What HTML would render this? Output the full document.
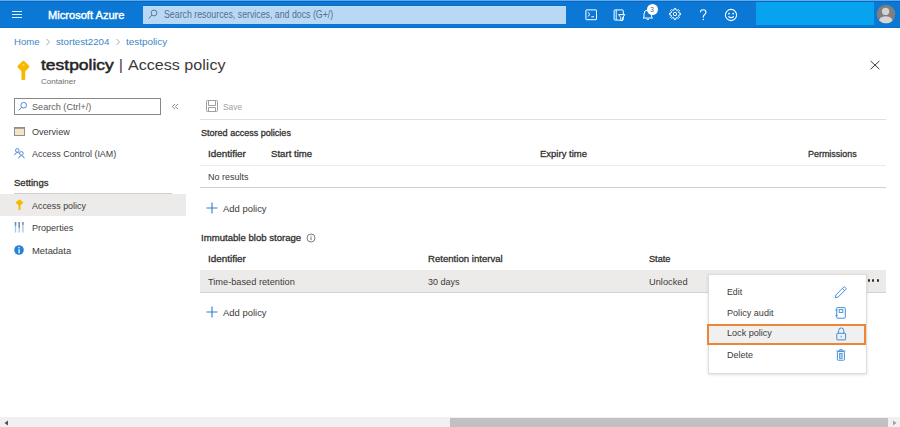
<!DOCTYPE html>
<html><head><meta charset="utf-8"><style>
html,body{margin:0;padding:0;width:900px;height:427px;overflow:hidden;background:#fff;position:relative;font-family:"Liberation Sans", sans-serif}
.t{position:absolute;white-space:nowrap;line-height:1}
.r{position:absolute}
</style></head><body>
<div class="r" style="left:0px;top:0px;width:900px;height:28px;background:#0a78d4"></div>
<div class="r" style="left:0px;top:27px;width:900px;height:1px;background:#0a6fc6"></div>
<div class="r" style="left:0px;top:0px;width:900px;height:1px;background:#5eaaf2"></div>
<div class="r" style="left:0px;top:1px;width:900px;height:1px;background:#0a68bc"></div>
<div class="r" style="left:11.6px;top:11px;width:10.9px;height:1px;background:#dcefff"></div>
<div class="r" style="left:11.6px;top:14px;width:10.9px;height:1px;background:#dcefff"></div>
<div class="r" style="left:11.6px;top:17px;width:10.9px;height:1px;background:#dcefff"></div>
<div class="t" style="left:48.3px;top:10px;font-size:10.6px;color:#fff;font-weight:normal;-webkit-text-stroke:0.4px #fff;transform:scaleX(1.0477);transform-origin:0 0;">Microsoft Azure</div>
<div class="r" style="left:142.8px;top:6px;width:423.2px;height:18px;background:#b9d8f4;border-top:1px solid #b8e2fb;box-sizing:border-box;box-shadow:0 -1px 0 #0a6cc2"></div>
<svg class="r" style="left:148px;top:9px" width="10" height="11" viewBox="0 0 10 11"><circle cx="6" cy="4" r="2.9" fill="none" stroke="#55769a" stroke-width="0.95"/><line x1="3.9" y1="6.1" x2="0.8" y2="9.4" stroke="#55769a" stroke-width="1"/></svg>
<div class="t" style="left:164.4px;top:10px;font-size:10px;color:#52708f;font-weight:normal;transform:scaleX(0.8786);transform-origin:0 0;">Search resources, services, and docs (G+/)</div>
<svg class="r" style="left:584.5px;top:9px" width="13" height="12" viewBox="0 0 13 12"><rect x="0.9" y="0.9" width="10.6" height="9.8" rx="0.5" fill="none" stroke="#ffffff" stroke-width="1"/><polyline points="2.7,3.3 5,5.4 2.7,7.6" fill="none" stroke="#ffffff" stroke-width="1"/><line x1="6.3" y1="7.8" x2="9" y2="7.8" stroke="#ffffff" stroke-width="1"/></svg>
<svg class="r" style="left:612.5px;top:8.5px" width="13" height="13" viewBox="0 0 13 13"><rect x="1.1" y="0.9" width="9.2" height="10.2" rx="1" fill="none" stroke="#ffffff" stroke-width="1"/><line x1="3.2" y1="0.9" x2="3.2" y2="11" stroke="#ffffff" stroke-width="1"/><polygon points="5.6,5.6 11.8,5.6 9.6,8.6 9.6,11.6 7.8,11.6 7.8,8.6" fill="#0a78d4" stroke="#ffffff" stroke-width="1" stroke-linejoin="round"/></svg>
<svg class="r" style="left:641px;top:8px" width="13" height="13" viewBox="0 0 13 13"><path d="M3,9.3 V6 Q3,2 6.8,2 Q10.6,2 10.6,6 V9.3 L11.6,10 H2 Z" fill="none" stroke="#ffffff" stroke-width="1" stroke-linejoin="round"/><path d="M5.6,11 Q6.8,12.3 8,11" fill="none" stroke="#ffffff" stroke-width="1"/></svg>
<div class="r" style="left:646.5px;top:4.3px;width:11.2px;height:11.2px;border-radius:50%;background:#fff"></div>
<div class="t" style="left:650.3px;top:7px;font-size:6.5px;color:#605e5c;font-weight:normal;">3</div>
<svg class="r" style="left:667.8px;top:7.2px" width="14" height="14" viewBox="0 0 14 14"><path d="M10.99,6.04 L12.55,6.25 L12.55,7.75 L10.99,7.96 L10.50,9.14 L11.45,10.40 L10.40,11.45 L9.14,10.50 L7.96,10.99 L7.75,12.55 L6.25,12.55 L6.04,10.99 L4.86,10.50 L3.60,11.45 L2.55,10.40 L3.50,9.14 L3.01,7.96 L1.45,7.75 L1.45,6.25 L3.01,6.04 L3.50,4.86 L2.55,3.60 L3.60,2.55 L4.86,3.50 L6.04,3.01 L6.25,1.45 L7.75,1.45 L7.96,3.01 L9.14,3.50 L10.40,2.55 L11.45,3.60 L10.50,4.86 Z" fill="none" stroke="#ffffff" stroke-width="1" stroke-linejoin="round"/><circle cx="7" cy="7" r="1.7" fill="none" stroke="#ffffff" stroke-width="1"/></svg>
<svg class="r" style="left:699px;top:9px" width="9" height="12" viewBox="0 0 9 12"><path d="M1.4,3.3 Q1.4,0.7 4.2,0.7 Q7,0.7 7,3.1 Q7,4.6 5.4,5.7 Q4.3,6.5 4.3,7.9 V8.6" fill="none" stroke="#ffffff" stroke-width="1.15"/><circle cx="4.3" cy="10.5" r="0.75" fill="#ffffff"/></svg>
<svg class="r" style="left:724px;top:7.5px" width="14" height="14" viewBox="0 0 14 14"><circle cx="7" cy="7" r="5.6" fill="none" stroke="#ffffff" stroke-width="1.1"/><circle cx="5" cy="5.6" r="0.95" fill="#ffffff"/><circle cx="9.2" cy="5.6" r="0.95" fill="#ffffff"/><path d="M4.3,8.3 Q7.1,11 9.9,8.3" fill="none" stroke="#ffffff" stroke-width="1.1"/></svg>
<div class="r" style="left:756px;top:2px;width:118px;height:23px;background:#08a3ee"></div>
<svg class="r" style="left:876px;top:4px" width="20" height="20" viewBox="0 0 20 20"><defs><clipPath id="avc"><circle cx="10" cy="10.1" r="9.3"/></clipPath></defs><circle cx="10" cy="10.1" r="9.3" fill="#7f7f7f"/><g clip-path="url(#avc)"><circle cx="9.6" cy="7.4" r="3.7" fill="#d2d2d2"/><path d="M2.5,19.5 Q2.5,12.3 9.8,12.3 Q17,12.3 17,19.5 Z" fill="#d6d6d6"/></g></svg>
<div class="t" style="left:14.2px;top:38px;font-size:9.3px;color:#3a87c6;font-weight:normal;transform:scaleX(1.0317);transform-origin:0 0;">Home</div>
<svg class="r" style="left:45px;top:38px" width="6" height="8" viewBox="0 0 6 8"><polyline points="1.5,1 4.5,4 1.5,7" fill="none" stroke="#a19f9d" stroke-width="0.9"/></svg>
<div class="t" style="left:55.9px;top:38px;font-size:9.3px;color:#3a87c6;font-weight:normal;transform:scaleX(1.0416);transform-origin:0 0;">stortest2204</div>
<svg class="r" style="left:114.5px;top:38px" width="6" height="8" viewBox="0 0 6 8"><polyline points="1.5,1 4.5,4 1.5,7" fill="none" stroke="#a19f9d" stroke-width="0.9"/></svg>
<div class="t" style="left:125.6px;top:38px;font-size:9.3px;color:#3a87c6;font-weight:normal;transform:scaleX(1.0628);transform-origin:0 0;">testpolicy</div>
<svg class="r" style="left:16px;top:60px" width="15" height="21" viewBox="0 0 15 21"><path d="M7.4,2.3 L11.8,6.6 L7.4,10.9 L3,6.6 Z" fill="#f7b900" stroke="#f7b900" stroke-width="3" stroke-linejoin="round"/><rect x="5.4" y="8" width="3.8" height="12" rx="1" fill="#f7b900"/><ellipse cx="7.4" cy="5" rx="1.3" ry="1" fill="#ffd84d"/></svg>
<div class="t" style="left:41.2px;top:57px;font-size:15.2px;color:#252423;font-weight:normal;-webkit-text-stroke:0.5px #252423;transform:scaleX(1.1499);transform-origin:0 0;">testpolicy</div>
<div class="t" style="left:119px;top:58px;font-size:14.5px;color:#323130;font-weight:normal;">|</div>
<div class="t" style="left:128.3px;top:58px;font-size:14.5px;color:#3b3a39;font-weight:normal;transform:scaleX(1.1099);transform-origin:0 0;">Access policy</div>
<div class="t" style="left:41.2px;top:78px;font-size:8px;color:#6e6c6a;font-weight:normal;transform:scaleX(1.0032);transform-origin:0 0;">Container</div>
<svg class="r" style="left:868.7px;top:59px" width="12" height="12" viewBox="0 0 12 12"><path d="M1.6,2 L10.4,10.2 M10.4,2 L1.6,10.2" stroke="#3b3a39" stroke-width="1"/></svg>
<div class="r" style="left:14px;top:98px;width:147px;height:16.5px;border:1px solid #8a8886;box-sizing:border-box;background:#fff"></div>
<svg class="r" style="left:18px;top:101px" width="10" height="11" viewBox="0 0 10 11"><circle cx="5.7" cy="4.2" r="2.8" fill="none" stroke="#4a86cc" stroke-width="0.95"/><line x1="3.7" y1="6.2" x2="0.6" y2="9.4" stroke="#4a86cc" stroke-width="1"/></svg>
<div class="t" style="left:31.7px;top:103px;font-size:9.3px;color:#605e5c;font-weight:normal;transform:scaleX(0.9785);transform-origin:0 0;">Search (Ctrl+/)</div>
<svg class="r" style="left:171px;top:103px" width="8" height="8" viewBox="0 0 8 8"><polyline points="4,1 1.3,3.6 4,6.2" fill="none" stroke="#8a8886" stroke-width="1"/><polyline points="7,1 4.3,3.6 7,6.2" fill="none" stroke="#8a8886" stroke-width="1"/></svg>
<svg class="r" style="left:14px;top:126.8px" width="11" height="9" viewBox="0 0 11 9"><defs><radialGradient id="ovg" cx="0.45" cy="0.5" r="0.6"><stop offset="0" stop-color="#fde3a8"/><stop offset="1" stop-color="#efe6d6"/></radialGradient></defs><rect x="0" y="0" width="11" height="9" fill="#8e8e8e"/><rect x="1" y="1.8" width="9" height="6.2" fill="url(#ovg)"/></svg>
<div class="t" style="left:31.7px;top:128px;font-size:9.3px;color:#3b3a39;font-weight:normal;transform:scaleX(0.9729);transform-origin:0 0;">Overview</div>
<svg class="r" style="left:14px;top:147.8px" width="11" height="11" viewBox="0 0 11 11"><circle cx="3.3" cy="2.4" r="1.8" fill="none" stroke="#3f7fcf" stroke-width="0.9"/><path d="M0.6,7.2 Q1,4.6 3.3,4.6 Q4.8,4.6 5.4,5.6" fill="none" stroke="#3f7fcf" stroke-width="0.9"/><circle cx="7.4" cy="5.4" r="1.8" fill="none" stroke="#3f7fcf" stroke-width="0.9"/><path d="M4.6,10.4 Q5,7.7 7.4,7.7 Q9.8,7.7 10.3,10.4" fill="none" stroke="#3f7fcf" stroke-width="0.9"/></svg>
<div class="t" style="left:31.7px;top:150px;font-size:9.3px;color:#3b3a39;font-weight:normal;transform:scaleX(0.9587);transform-origin:0 0;">Access Control (IAM)</div>
<div class="t" style="left:14.2px;top:179px;font-size:9.3px;color:#323130;font-weight:normal;-webkit-text-stroke:0.3px #323130;transform:scaleX(1.0270);transform-origin:0 0;">Settings</div>
<div class="r" style="left:14px;top:193px;width:158px;height:1px;background:#d2d0ce"></div>
<div class="r" style="left:0px;top:193.6px;width:186px;height:22.0px;background:#edebe9"></div>
<svg class="r" style="left:15px;top:199px" width="9" height="12" viewBox="0 0 9 12"><path d="M4.5,1.6 L7,3.6 L4.5,5.6 L2,3.6 Z" fill="#f7b900" stroke="#f7b900" stroke-width="2" stroke-linejoin="round"/><rect x="3.5" y="4" width="2" height="7" rx="0.5" fill="#f7b900"/></svg>
<div class="t" style="left:31.7px;top:202px;font-size:9.3px;color:#3b3a39;font-weight:normal;transform:scaleX(0.9569);transform-origin:0 0;">Access policy</div>
<svg class="r" style="left:14px;top:222px" width="11" height="10.5" viewBox="0 0 11 11" preserveAspectRatio="none"><line x1="1.5" y1="0" x2="1.5" y2="11" stroke="#a9c6e3" stroke-width="1.4"/><line x1="5.2" y1="0" x2="5.2" y2="11" stroke="#a9c6e3" stroke-width="1.4"/><line x1="8.9" y1="0" x2="8.9" y2="11" stroke="#a9c6e3" stroke-width="1.4"/><rect x="0.8" y="0" width="1.4" height="4" fill="#6a8fb5"/><rect x="4.5" y="0" width="1.4" height="6" fill="#6a8fb5"/><rect x="8.2" y="0" width="1.4" height="3" fill="#6a8fb5"/></svg>
<div class="t" style="left:31.7px;top:224px;font-size:9.3px;color:#3b3a39;font-weight:normal;transform:scaleX(0.9723);transform-origin:0 0;">Properties</div>
<svg class="r" style="left:14px;top:245.2px" width="10" height="10" viewBox="0 0 10 10"><circle cx="5" cy="5" r="4.8" fill="#2a82d6"/><rect x="4.4" y="4.2" width="1.3" height="4" fill="#fff"/><circle cx="5" cy="2.7" r="0.8" fill="#fff"/></svg>
<div class="t" style="left:31.7px;top:247px;font-size:9.3px;color:#3b3a39;font-weight:normal;transform:scaleX(1.0086);transform-origin:0 0;">Metadata</div>
<svg class="r" style="left:206px;top:100px" width="12" height="12" viewBox="0 0 12 12"><rect x="0.5" y="0.5" width="11" height="11" rx="0.8" fill="none" stroke="#a19f9d" stroke-width="1"/><path d="M2.5,0.5 V5.5 H9.5 V0.5" fill="none" stroke="#a19f9d" stroke-width="1"/><path d="M2.5,11.5 V7.5 H9.5 V11.5" fill="none" stroke="#a19f9d" stroke-width="1"/></svg>
<div class="t" style="left:223px;top:103px;font-size:9.3px;color:#a19f9d;font-weight:normal;transform:scaleX(0.9008);transform-origin:0 0;">Save</div>
<div class="r" style="left:200px;top:118.5px;width:686px;height:1.0999999999999943px;background:#e1dfdd"></div>
<div class="t" style="left:200.7px;top:129px;font-size:9.3px;color:#323130;font-weight:normal;-webkit-text-stroke:0.3px #323130;transform:scaleX(0.9719);transform-origin:0 0;">Stored access policies</div>
<div class="t" style="left:208px;top:150px;font-size:9.3px;color:#323130;font-weight:normal;-webkit-text-stroke:0.3px #323130;transform:scaleX(1.0625);transform-origin:0 0;">Identifier</div>
<div class="t" style="left:270.9px;top:150px;font-size:9.3px;color:#323130;font-weight:normal;-webkit-text-stroke:0.3px #323130;transform:scaleX(1.0357);transform-origin:0 0;">Start time</div>
<div class="t" style="left:539.7px;top:150px;font-size:9.3px;color:#323130;font-weight:normal;-webkit-text-stroke:0.3px #323130;transform:scaleX(1.0221);transform-origin:0 0;">Expiry time</div>
<div class="t" style="left:807.6px;top:150px;font-size:9.3px;color:#323130;font-weight:normal;-webkit-text-stroke:0.3px #323130;transform:scaleX(0.9617);transform-origin:0 0;">Permissions</div>
<div class="r" style="left:200px;top:165px;width:686px;height:1px;background:#edebe9"></div>
<div class="t" style="left:208px;top:173px;font-size:9.3px;color:#3b3a39;font-weight:normal;transform:scaleX(0.9651);transform-origin:0 0;">No results</div>
<div class="r" style="left:200px;top:187px;width:686px;height:1px;background:#d2d0ce"></div>
<svg class="r" style="left:205.5px;top:201.8px" width="12" height="12" viewBox="0 0 12 12"><path d="M6,0.5 V11.5 M0.5,6 H11.5" stroke="#2b7cd3" stroke-width="1.1"/></svg>
<div class="t" style="left:223px;top:205px;font-size:9.3px;color:#3b3a39;font-weight:normal;transform:scaleX(1.0162);transform-origin:0 0;">Add policy</div>
<div class="t" style="left:200.5px;top:234px;font-size:9.3px;color:#323130;font-weight:normal;-webkit-text-stroke:0.3px #323130;transform:scaleX(1.0313);transform-origin:0 0;">Immutable blob storage</div>
<svg class="r" style="left:306px;top:233px" width="10" height="10" viewBox="0 0 10 10"><circle cx="5" cy="5" r="4" fill="none" stroke="#605e5c" stroke-width="0.8"/><rect x="4.55" y="4.2" width="0.9" height="3" fill="#605e5c"/><rect x="4.55" y="2.6" width="0.9" height="0.9" fill="#605e5c"/></svg>
<div class="t" style="left:208px;top:255px;font-size:9.3px;color:#323130;font-weight:normal;-webkit-text-stroke:0.3px #323130;transform:scaleX(1.0625);transform-origin:0 0;">Identifier</div>
<div class="t" style="left:428.3px;top:255px;font-size:9.3px;color:#323130;font-weight:normal;-webkit-text-stroke:0.3px #323130;transform:scaleX(1.0323);transform-origin:0 0;">Retention interval</div>
<div class="t" style="left:649.3px;top:255px;font-size:9.3px;color:#323130;font-weight:normal;-webkit-text-stroke:0.3px #323130;transform:scaleX(0.9853);transform-origin:0 0;">State</div>
<div class="r" style="left:200px;top:269.8px;width:686px;height:23.0px;background:#edebe9;border-bottom:1.3px solid #d4d2d0;box-sizing:border-box"></div>
<div class="t" style="left:207.8px;top:278px;font-size:9.3px;color:#3b3a39;font-weight:normal;transform:scaleX(0.9918);transform-origin:0 0;">Time-based retention</div>
<div class="t" style="left:428px;top:278px;font-size:9.3px;color:#3b3a39;font-weight:normal;transform:scaleX(0.9674);transform-origin:0 0;">30 days</div>
<div class="t" style="left:649.3px;top:278px;font-size:9.3px;color:#3b3a39;font-weight:normal;transform:scaleX(0.9983);transform-origin:0 0;">Unlocked</div>
<div class="r" style="left:868.0px;top:279.4px;width:2.2000000000000455px;height:2.2000000000000455px;background:#323130;border-radius:50%"></div>
<div class="r" style="left:872.3px;top:279.4px;width:2.2000000000000455px;height:2.2000000000000455px;background:#323130;border-radius:50%"></div>
<div class="r" style="left:876.6px;top:279.4px;width:2.2000000000000455px;height:2.2000000000000455px;background:#323130;border-radius:50%"></div>
<svg class="r" style="left:205.5px;top:306.3px" width="12" height="12" viewBox="0 0 12 12"><path d="M6,0.5 V11.5 M0.5,6 H11.5" stroke="#2b7cd3" stroke-width="1.1"/></svg>
<div class="t" style="left:223px;top:309px;font-size:9.3px;color:#3b3a39;font-weight:normal;transform:scaleX(1.0162);transform-origin:0 0;">Add policy</div>
<div class="r" style="left:707.5px;top:273.5px;width:159.0px;height:100.0px;background:#fff;border:1px solid #dcdcdc;box-sizing:border-box;box-shadow:0 1px 3px rgba(0,0,0,0.12)"></div>
<div class="r" style="left:706.7px;top:324.3px;width:159.79999999999995px;height:21.19999999999999px;background:#f0f0f0;border:2px solid #ec8535;box-sizing:border-box"></div>
<div class="t" style="left:726.5px;top:288px;font-size:9.3px;color:#3b3a39;font-weight:normal;transform:scaleX(0.9419);transform-origin:0 0;">Edit</div>
<div class="t" style="left:726.5px;top:309px;font-size:9.3px;color:#3b3a39;font-weight:normal;transform:scaleX(0.9780);transform-origin:0 0;">Policy audit</div>
<div class="t" style="left:726.5px;top:329px;font-size:9.3px;color:#3b3a39;font-weight:normal;transform:scaleX(0.9761);transform-origin:0 0;">Lock policy</div>
<div class="t" style="left:726.5px;top:351px;font-size:9.3px;color:#3b3a39;font-weight:normal;transform:scaleX(0.9674);transform-origin:0 0;">Delete</div>
<svg class="r" style="left:834px;top:285.5px" width="13" height="13" viewBox="0 0 13 13"><path d="M9.6,1.2 Q10.4,0.6 11.2,1.3 L11.7,1.8 Q12.4,2.6 11.8,3.4 L4.2,11 L1.2,11.8 L2,8.8 Z M8.4,2.5 L10.5,4.6" fill="none" stroke="#3a8ad8" stroke-width="0.95" stroke-linejoin="round"/></svg>
<svg class="r" style="left:835px;top:307px" width="11" height="12" viewBox="0 0 11 12"><rect x="1.7" y="0.6" width="8.6" height="10.6" rx="0.8" fill="none" stroke="#3a8ad8" stroke-width="0.95"/><rect x="4.2" y="2.6" width="3.6" height="2.8" fill="none" stroke="#3a8ad8" stroke-width="0.9"/><line x1="0.3" y1="3" x2="2.6" y2="3" stroke="#3a8ad8" stroke-width="0.9"/><line x1="0.3" y1="8.6" x2="2.6" y2="8.6" stroke="#3a8ad8" stroke-width="0.9"/></svg>
<svg class="r" style="left:835.5px;top:327px" width="11" height="14" viewBox="0 0 11 14"><path d="M2.6,6.3 V3.8 Q2.6,0.9 5.2,0.9 Q7.8,0.9 7.8,3.8 V6.3" fill="none" stroke="#3a8ad8" stroke-width="0.95"/><rect x="0.8" y="6.3" width="8.8" height="6.6" rx="0.6" fill="none" stroke="#3a8ad8" stroke-width="0.95"/><line x1="5.2" y1="8.8" x2="5.2" y2="10.4" stroke="#3a8ad8" stroke-width="0.9"/></svg>
<svg class="r" style="left:835.5px;top:349px" width="10" height="12" viewBox="0 0 10 12"><rect x="1.4" y="2.6" width="7" height="8.6" rx="0.6" fill="none" stroke="#3a8ad8" stroke-width="0.95"/><line x1="0.4" y1="2" x2="9.4" y2="2" stroke="#3a8ad8" stroke-width="0.95"/><path d="M3.6,1.8 V0.6 H6.2 V1.8" fill="none" stroke="#3a8ad8" stroke-width="0.8"/><rect x="3.6" y="4.4" width="2.6" height="5.2" fill="#a9cdf0" stroke="#3a8ad8" stroke-width="0.7"/></svg>
<div class="r" style="left:0px;top:417px;width:900px;height:10px;background:#f0f0f0"></div>
<div class="r" style="left:450px;top:417.5px;width:438px;height:9.5px;background:#c1c1c1"></div>
<svg class="r" style="left:3px;top:419.7px" width="6" height="6" viewBox="0 0 6 6"><polygon points="5,0.5 5,5.5 1.5,3" fill="#505050"/></svg>
<svg class="r" style="left:891.5px;top:420px" width="6" height="6" viewBox="0 0 6 6"><polygon points="1,0.5 1,5.5 4.5,3" fill="#a0a0a0"/></svg>
</body></html>
